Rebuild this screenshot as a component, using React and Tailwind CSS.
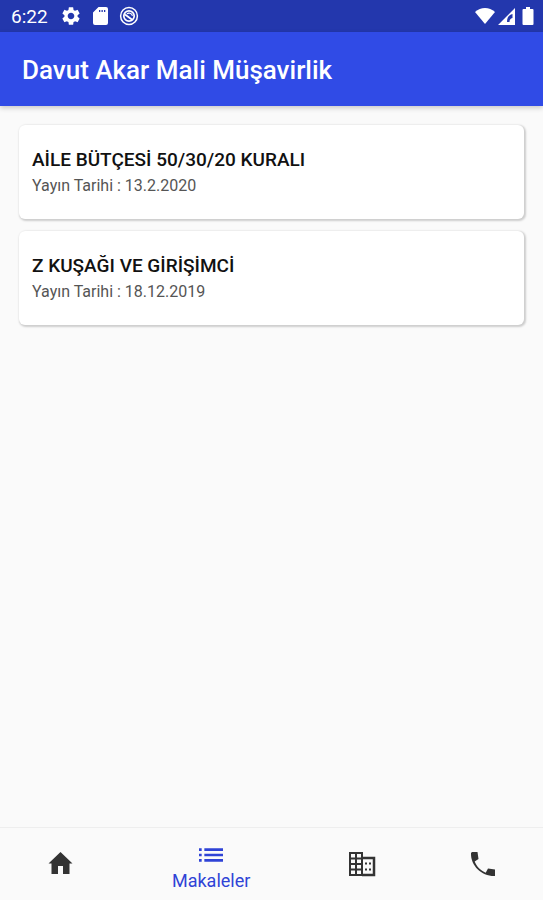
import React, { useState } from "react";
import { clsx } from "clsx";
import { MdList, MdSettings } from "react-icons/md";

const articles = [
  { id: 1, title: "AİLE BÜTÇESİ 50/30/20 KURALI", date: "13.2.2020" },
  { id: 2, title: "Z KUŞAĞI VE GİRİŞİMCİ", date: "18.12.2019" },
];

const HomeIcon = ({ className }) => (
  <svg viewBox="0 0 32 32" fill="currentColor" className={className}>
    <path d="M16.500 4 4.500 15.500h3V26H14v-8h5v8h6.500V15.500h3z" />
  </svg>
);

const BuildingIcon = ({ className }) => (
  <svg viewBox="0 0 32 32" fill="none" stroke="currentColor" strokeWidth="2" className={className}>
    <path d="M4 5h12v22H4zM10 5v22M4 10.500h12M4 16h12M4 21.500h12" />
    <path d="M16 10h12v17H16" strokeWidth="2.500" />
    <path d="M19 15.500h2M23 15.500h2M19 21.500h2M23 21.500h2" />
  </svg>
);

const PhoneIcon = ({ className }) => (
  <svg viewBox="0 0 32 32" fill="currentColor" className={className}>
    <path d="M5 4h5.500l1 7-3.800 2.500c1.800 4.900 6 9.200 11 11.200l2.300-4.200 7 1V28C15 28.500 3.500 18 4 5z" />
  </svg>
);

const tabs = [
  { key: "home", label: "Anasayfa", icon: HomeIcon },
  { key: "articles", label: "Makaleler", icon: MdList },
  { key: "company", label: "Kurumsal", icon: BuildingIcon },
  { key: "contact", label: "İletişim", icon: PhoneIcon },
];

const StatusBar = () => (
  <div className="flex h-8 items-center justify-between bg-[#2337ad] pl-[11px] pr-[9px] text-white">
    <div className="flex items-center">
      <span className="w-[49px] pt-px text-[19px] leading-6">6:22</span>
      <MdSettings className="size-[22px]" />
      <svg viewBox="0 0 15 18" fill="currentColor" className="ml-[11px] h-[18px] w-[15px]">
        <path
          d="M5.500 0H13a2 2 0 0 1 2 2v14a2 2 0 0 1-2 2H2a2 2 0 0 1-2-2V5.500zM6 3v2h1.300V3zm2.500 0v2h1.300V3zM11 3v2h1.300V3z"
          fillRule="evenodd"
        />
      </svg>
      <svg viewBox="0 0 20 20" fill="none" stroke="currentColor" className="ml-[11px] size-5">
        <circle cx="10" cy="10" r="8.400" strokeWidth="1.500" />
        <circle cx="10" cy="10" r="5.200" strokeWidth="1.700" />
        <path d="M6 8.500 13.500 14" strokeWidth="1.800" />
        <path d="M8 7.800c2-1.500 4.500-.5 5.500 2" strokeWidth="1.200" />
      </svg>
    </div>
    <div className="flex items-center">
      <svg viewBox="0 0 20 16" fill="currentColor" className="h-4 w-5">
        <path d="M10 16 0 4C3 1.300 6.300 0 10 0s7 1.300 10 4z" />
      </svg>
      <svg viewBox="0 0 17 17" fill="currentColor" className="ml-[3px] size-[17px]">
        <path d="M17 0v17H0zM14.500 6C10.500 7 9 10 9 14h2.500c0-2 .8-3.500 3-4z" fillRule="evenodd" />
      </svg>
      <svg viewBox="0 0 12 18" fill="currentColor" className="ml-[7px] h-[18px] w-3">
        <path d="M4 0h4v2h2.500a1 1 0 0 1 1 1v14a1 1 0 0 1-1 1h-9a1 1 0 0 1-1-1V3a1 1 0 0 1 1-1H4z" />
      </svg>
    </div>
  </div>
);

const ArticleCard = ({ title, date }) => (
  <article className="rounded-md bg-white px-[13px] pt-[23px] pb-[23px] shadow-[1px_1px_2px_1px_rgba(0,0,0,0.18)]">
    <h2 className="text-[19px] leading-6 font-medium text-[#111111]">{title}</h2>
    <p className="mt-1 text-base leading-5 text-[#555555]">Yayın Tarihi : {date}</p>
  </article>
);

const App = () => {
  const [active, setActive] = useState("articles");

  return (
    <div className="flex min-h-screen flex-col bg-[#fafafa] font-[Roboto,sans-serif]">
      <StatusBar />
      <header className="bg-[#304be6] px-[22px] pt-[21px] pb-[19px] shadow-[0_2px_5px_rgba(0,0,0,0.2)]">
        <h1 className="text-[26px] leading-[34px] font-medium text-white">
          Davut Akar Mali Müşavirlik
        </h1>
      </header>

      <main className="flex flex-1 flex-col gap-3 px-[19px] pt-[19px]">
        {articles.map((article) => (
          <ArticleCard key={article.id} title={article.title} date={article.date} />
        ))}
      </main>

      <nav className="flex h-[73px] border-t border-[#eeeeee]">
        {tabs.map(({ key, label, icon: Icon }) => {
          const selected = key === active;
          return (
            <button
              key={key}
              type="button"
              aria-label={label}
              onClick={() => setActive(key)}
              className={clsx(
                "flex basis-0 flex-col items-center justify-center",
                selected ? "grow-3 pt-1.5 text-[#2f43d6]" : "grow-2 text-[#333333]"
              )}
            >
              <Icon className="size-8" />
              {selected && <span className="-mt-1 text-lg leading-7">{label}</span>}
            </button>
          );
        })}
      </nav>
    </div>
  );
};

export default App;
